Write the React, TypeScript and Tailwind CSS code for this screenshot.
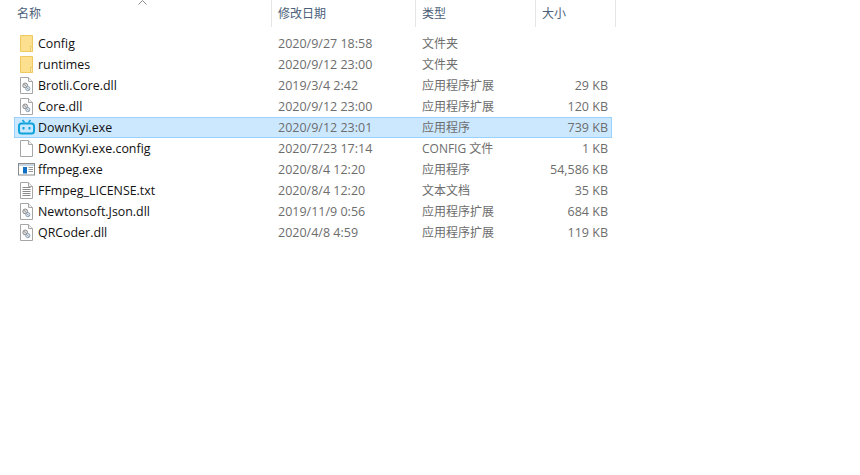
import React from 'react';

const font = { fontFamily: '"Open Sans", "Noto Sans CJK SC", sans-serif' };

type Kind = 'folder' | 'dll' | 'bili' | 'blank' | 'exe' | 'txt';

const files: { name: string; date: string; type: string; size: string; kind: Kind; selected?: boolean }[] = [
  { name: 'Config', date: '2020/9/27 18:58', type: '文件夹', size: '', kind: 'folder' },
  { name: 'runtimes', date: '2020/9/12 23:00', type: '文件夹', size: '', kind: 'folder' },
  { name: 'Brotli.Core.dll', date: '2019/3/4 2:42', type: '应用程序扩展', size: '29 KB', kind: 'dll' },
  { name: 'Core.dll', date: '2020/9/12 23:00', type: '应用程序扩展', size: '120 KB', kind: 'dll' },
  { name: 'DownKyi.exe', date: '2020/9/12 23:01', type: '应用程序', size: '739 KB', kind: 'bili', selected: true },
  { name: 'DownKyi.exe.config', date: '2020/7/23 17:14', type: 'CONFIG 文件', size: '1 KB', kind: 'blank' },
  { name: 'ffmpeg.exe', date: '2020/8/4 12:20', type: '应用程序', size: '54,586 KB', kind: 'exe' },
  { name: 'FFmpeg_LICENSE.txt', date: '2020/8/4 12:20', type: '文本文档', size: '35 KB', kind: 'txt' },
  { name: 'Newtonsoft.Json.dll', date: '2019/11/9 0:56', type: '应用程序扩展', size: '684 KB', kind: 'dll' },
  { name: 'QRCoder.dll', date: '2020/4/8 4:59', type: '应用程序扩展', size: '119 KB', kind: 'dll' },
];

const Page = ({ children }: { children?: React.ReactNode }) => (
  <>
    <path d="M2.5 0.5H10.5L14.5 4.5V16.5H2.5Z" fill="#fff" stroke="#a6a6a6" />
    <path d="M10.5 0.5V4.5H14.5" fill="#f0f0f0" stroke="#a6a6a6" />
    {children}
  </>
);

const FileIcon = ({ kind }: { kind: Kind }) => {
  if (kind === 'folder') {
    return (
      <svg width="17" height="17" viewBox="0 0 17 17">
        <path d="M2.5 0.5H14.5V16.5H2.5Z" fill="#fce08f" stroke="#efc862" />
        <path d="M12.5 11.5V16.5H14.5V11.5Z" fill="#fbe9b0" stroke="#efc862" />
      </svg>
    );
  }
  if (kind === 'dll') {
    return (
      <svg width="17" height="17" viewBox="0 0 17 17">
        <Page>
          <circle cx="7.2" cy="8.4" r="2.4" fill="#dcdcdc" stroke="#8c8c8c" />
          <circle cx="9.8" cy="11.6" r="2.1" fill="#dfe9f2" stroke="#8ca0b4" />
          <path d="M6 7.2L8.4 9.6M8.8 10.6L10.8 12.6" stroke="#777" strokeWidth="0.7" />
        </Page>
      </svg>
    );
  }
  if (kind === 'blank') {
    return (
      <svg width="17" height="17" viewBox="0 0 17 17">
        <Page />
      </svg>
    );
  }
  if (kind === 'txt') {
    return (
      <svg width="17" height="17" viewBox="0 0 17 17">
        <Page>
          <path d="M4.5 5.5H12.5M4.5 7.5H12.5M4.5 9.5H12.5M4.5 11.5H12.5M4.5 13.5H12.5" stroke="#8a8a8a" />
        </Page>
      </svg>
    );
  }
  if (kind === 'exe') {
    return (
      <svg width="17" height="17" viewBox="0 0 17 17">
        <rect x="0.5" y="2.5" width="16" height="11.5" fill="#fff" stroke="#8a8a8a" />
        <rect x="1" y="3" width="15" height="2" fill="#c8d6e4" />
        <rect x="5" y="6" width="4" height="6.5" fill="#0f6fc6" />
        <path d="M10.5 6.5H15M10.5 8.5H15M10.5 10.5H15" stroke="#9a9a9a" />
      </svg>
    );
  }
  return (
    <svg width="17" height="17" viewBox="0 0 17 17">
      <rect x="1" y="4.5" width="15" height="10" rx="2.5" fill="none" stroke="#11a4dc" strokeWidth="2" />
      <path d="M4.5 1L6.5 3.5M12.5 1L10.5 3.5" stroke="#11a4dc" strokeWidth="1.6" />
      <path d="M5.5 8V10.5M11.5 8V10.5" stroke="#11a4dc" strokeWidth="2" />
    </svg>
  );
};

export default function App() {
  return (
    <div className="relative h-[475px] w-[860px] overflow-hidden bg-white text-[12.5px]" style={font}>
      {/* sort arrow */}
      <svg className="absolute left-[138px] top-0" width="9" height="5" viewBox="0 0 9 5">
        <path d="M0.5 4.5L4.5 0.5L8.5 4.5" fill="none" stroke="#8a8a8a" />
      </svg>

      <div className="flex h-[27px] pl-[14px] text-[12px] text-[#4c607a]">
        <div className="flex w-[258px] items-center border-r border-[#e5e5e5] pl-[3px]">名称</div>
        <div className="flex w-[144px] items-center border-r border-[#e5e5e5] pl-[6px]">修改日期</div>
        <div className="flex w-[120px] items-center border-r border-[#e5e5e5] pl-[6px]">类型</div>
        <div className="flex w-[80px] items-center border-r border-[#e5e5e5] pl-[6px]">大小</div>
      </div>

      <div className="mt-[6px] flex w-[612px] flex-col pl-[14px]">
        {files.map((f) => (
          <div
            key={f.name}
            className={`flex h-[21px] items-center border ${f.selected ? 'border-[#99d1ff] bg-[#cce8ff]' : 'border-transparent'}`}
          >
            <div className="flex w-[256px] items-center gap-[3px] pl-[3px] text-[12.4px] text-[#111111]">
              <FileIcon kind={f.kind} />
              <span className="pt-[2px]">{f.name}</span>
            </div>
            <div className="w-[144px] pl-[7px] pt-[2px] text-[#6d6d6d]">{f.date}</div>
            <div className="w-[120px] pl-[7px] text-[12px] text-[#6d6d6d]">{f.type}</div>
            <div className="flex-1 pr-[3px] pt-[2px] text-right text-[#6d6d6d]">{f.size}</div>
          </div>
        ))}
      </div>
    </div>
  );
}
